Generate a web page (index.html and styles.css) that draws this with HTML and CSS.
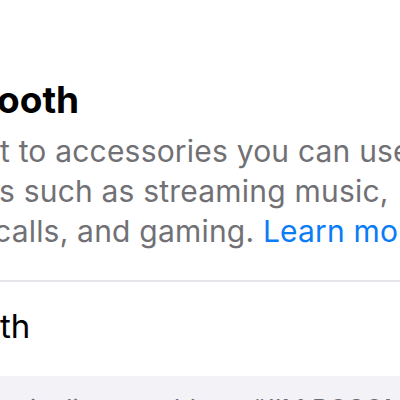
FILE: index.html
```html
<!DOCTYPE html>
<html lang="en">
<head>
  <meta charset="UTF-8" />
  <meta name="viewport" content="width=device-width, initial-scale=1.0" />
  <title>Bluetooth</title>
  <link rel="stylesheet" href="styles.css">
</head>
<body>
  <div class="header">
    <h1 class="title"><span class="pre">Bluet</span>ooth</h1>
    <p class="desc">
      <span class="line l1"><span class="pre">Connec</span>t to accessories you can use for</span>
      <span class="line l2"><span class="pre">activitie</span>s such as streaming music,</span>
      <span class="line l3"><span class="pre">making phone</span>calls, and gaming. <a href="#">Learn more...</a></span>
    </p>
  </div>

  <div class="row">
    <span class="row-label"><span class="pre">Bluetoo</span>th</span>
  </div>

  <div class="footer">
    <p class="note"><span class="pre">This iPhone</span>is discoverable as “JIM BOSOM’S iPhone”.</p>
  </div>
</body>
</html>
```

FILE: styles.css
```css
html, body { margin: 0; padding: 0; background: #fff; }
body { width: 400px; height: 400px; overflow: hidden; font-family: Inter, "Liberation Sans", sans-serif; }

/* the part of a word that runs off the left edge */
.pre { display: inline-block; width: 0; direction: rtl; white-space: nowrap; }

.header { padding: 77px 0 29px; border-bottom: 2px solid #e6e6ea; }
.title { margin: 0 0 0 -3px; font-size: 37px; line-height: 46px; font-weight: 700; color: #000; white-space: nowrap; }

.desc { margin: 8px 0 0; color: #717175; font-size: 30px; line-height: 40px; letter-spacing: 0.2px; }
.line { display: block; white-space: nowrap; }
.l1 { margin-left: 0; }
.l2 { margin-left: -1px; }
.l3 { margin-left: -6px; }
.desc a { color: #0a7cf5; text-decoration: none; }

.row { height: 94px; padding-top: 24px; box-sizing: border-box; }
.row-label { display: block; font-size: 33px; line-height: 40px; color: #000; white-space: nowrap; }

.footer { background: #f2f2f7; height: 40px; padding-top: 16px; box-sizing: border-box; }
.note { margin: 0 0 0 30px; font-size: 25.5px; line-height: 34px; color: #6d6d72; white-space: nowrap; }
```
